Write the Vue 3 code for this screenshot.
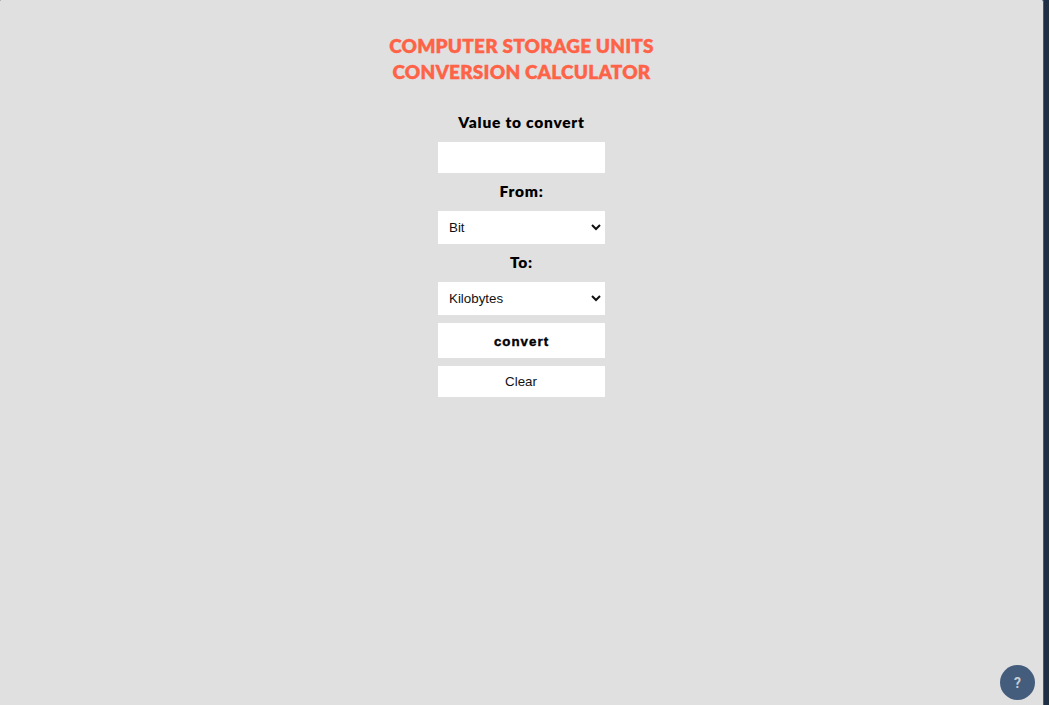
<script setup>
import { ref } from 'vue'
const value = ref('')
const from = ref('Bit')
const to = ref('Kilobytes')
const units = ['Bit', 'Bytes', 'Kilobytes', 'Megabytes', 'Gigabytes', 'Terabytes']
</script>

<template>
  <div class="page">
    <main class="panel">
      <h1><span>COMPUTER STORAGE UNITS</span><span>CONVERSION CALCULATOR</span></h1>
      <form class="form" @submit.prevent>
        <label class="first">Value to convert</label>
        <input v-model="value" type="text">
        <label>From:</label>
        <select v-model="from"><option v-for="u in units" :key="u">{{ u }}</option></select>
        <label>To:</label>
        <select v-model="to"><option v-for="u in units" :key="u">{{ u }}</option></select>
        <button class="convert" type="submit">convert</button>
        <button class="clear" type="button" @click="value = ''">Clear</button>
      </form>
    </main>
    <button class="help" type="button">?</button>
  </div>
</template>

<style>
body { margin: 0; overflow: hidden; }
</style>
<style scoped>
.page { height: 705px; background: #1f3044; box-sizing: border-box; padding-right: 5px; }
.panel { height: 705px; background: #e0e0e0; border-right: 1px solid #3f5f80; border-radius: 1px 2px 0 0; display: flex; flex-direction: column; align-items: center; box-sizing: border-box; padding-top: 33px; }
h1 { margin: 0; color: #ff6347; font: 800 19px/26px Lato, sans-serif; letter-spacing: .2px; -webkit-text-stroke: .3px #ff6347; display: flex; flex-direction: column; align-items: center; white-space: nowrap; }
.form { width: 167px; display: flex; flex-direction: column; margin-top: 24px; }
label { height: 38px; font: 800 15.5px/37px Lato, sans-serif; letter-spacing: .75px; text-align: center; white-space: nowrap; }
.first { height: 33px; line-height: 26px; }
input { height: 31px; border: 0; padding: 0 11px; box-sizing: border-box; width: 167px; background: #fff; outline: 0; }
select { height: 33px; width: 167px; border: 0; border-right: 1px solid #fff; border-radius: 0; background: #fff; box-sizing: border-box; padding: 0 0 0 7px; font: 13.333px "Liberation Sans", sans-serif; color: #111; }
button { border: 0; padding: 0; background: #fff; color: #111; font: 13.333px "Liberation Sans", sans-serif; }
.convert { height: 35px; margin-top: 8px; padding-top: 2px; color: #000; font: bold 13.333px "Liberation Sans", sans-serif; letter-spacing: 1px; -webkit-text-stroke: .4px #000; }
.clear { height: 31px; margin-top: 8px; padding-right: 1px; }
.help { position: absolute; right: 14px; bottom: 5px; width: 35px; height: 35px; border-radius: 50%; background: #445d7c; color: #c5ccd4; font: 700 14px Roboto, sans-serif; }
</style>
